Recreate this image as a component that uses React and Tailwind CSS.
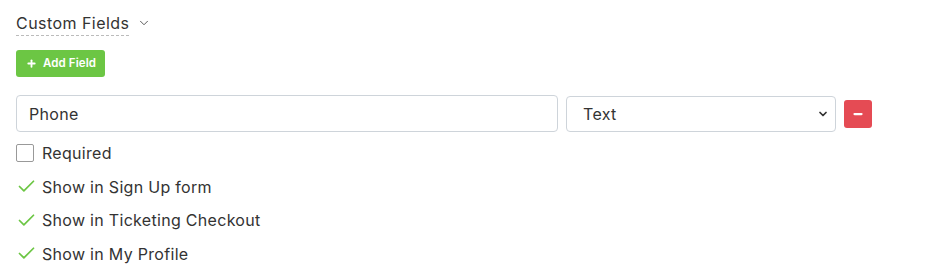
import { Plus, Minus, Check, ChevronDown } from "lucide-react";

export default function App() {
  const flags = ["Show in Sign Up form", "Show in Ticketing Checkout", "Show in My Profile"];

  return (
    <div
      className="w-[927px] h-[273px] bg-white text-[#333] px-4 pt-[11px]"
      style={{ fontFamily: "Inter, 'Open Sans', sans-serif" }}
    >
      {/* header */}
      <div className="flex items-center gap-2 h-[24px]">
        <span className="text-[16px] tracking-[0.45px] border-b border-dashed border-[#bbb] leading-[24px]">
          Custom Fields
        </span>
        <ChevronDown className="w-[14px] h-[14px] text-[#444]" strokeWidth={1.5} />
      </div>

      {/* add button */}
      <button className="mt-[15px] h-[27px] pl-[10px] pr-[9px] flex items-center gap-[6px] rounded-[3px] bg-[#6cc644] text-white text-[11.5px] tracking-[0.1px] font-semibold">
        <Plus className="w-[11px] h-[11px]" strokeWidth={4} />
        Add Field
      </button>

      {/* field row */}
      <div className="mt-[18px] flex items-center gap-2">
        <input
          defaultValue="Phone"
          className="w-[542px] h-[37px] border border-[#ced4da] rounded-[4px] px-3 text-[16px] tracking-[0.3px] text-[#333] outline-none"
        />
        <div className="relative w-[270px] h-[36px] border border-[#ced4da] rounded-[4px] flex items-center pl-4 text-[16px] tracking-[0.3px]">
          Text
          <ChevronDown className="absolute right-[6px] top-[11px] w-[12px] h-[12px] text-[#333]" strokeWidth={3.5} />
        </div>
        <button className="w-[28px] h-[28px] rounded-[3px] bg-[#e54b54] flex items-center justify-center">
          <Minus className="w-[12px] h-[12px] text-white" strokeWidth={4.5} />
        </button>
      </div>

      {/* options */}
      <div className="mt-[11px] flex items-center gap-2 h-[20px]">
        <span className="w-[18px] h-[18px] border border-[#999] rounded-[2px]" />
        <span className="text-[16px] tracking-[0.3px]">Required</span>
      </div>
      <div className="flex flex-col">
        {flags.map((f) => (
          <div key={f} className="flex items-center gap-[5px] h-[33.5px] first:mt-[7px]">
            <Check className="w-[21px] h-[21px] text-[#6cc644]" strokeWidth={2} />
            <span className="text-[16px] tracking-[0.3px]">{f}</span>
          </div>
        ))}
      </div>
    </div>
  );
}
